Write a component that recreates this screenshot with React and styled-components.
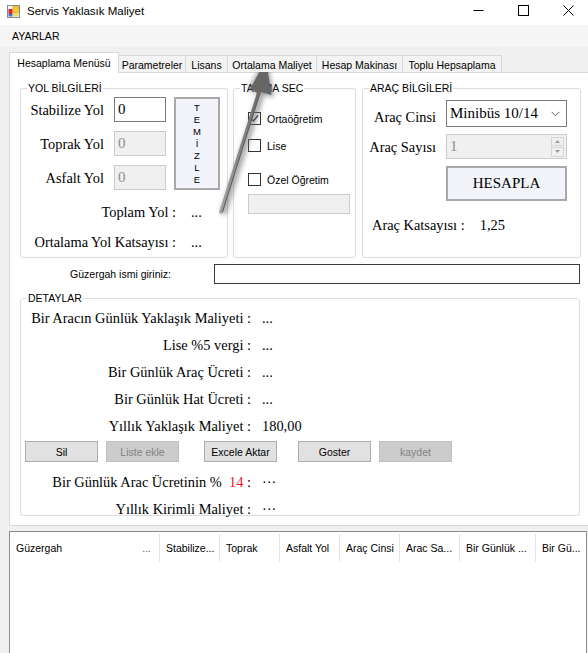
import React from 'react';
import styled, { createGlobalStyle } from 'styled-components';

const SANS = '"Liberation Sans", Arial, sans-serif';
const SERIF = '"Liberation Serif", "Times New Roman", serif';

const GlobalStyle = createGlobalStyle`
  html, body {
    margin: 0;
    padding: 0;
    background: #f0f0f0;
  }
  body {
    font-family: ${SANS};
    font-size: 10.5px;
    color: #000;
  }
  * { box-sizing: border-box; }
`;

const tabs = ['Hesaplama Menüsü', 'Parametreler', 'Lisans', 'Ortalama Maliyet', 'Hesap Makinası', 'Toplu Hepsaplama'];
const tabWidths = [110, 68, 43, 90, 87, 100];

const details = [
  ['Bir Aracın Günlük Yaklaşık Maliyeti :', '...'],
  ['Lise %5 vergi :', '...'],
  ['Bir Günlük Araç Ücreti :', '...'],
  ['Bir Günlük Hat Ücreti :', '...'],
  ['Yıllık Yaklaşık Maliyet :', '180,00'],
];

const columns = [
  { title: 'Güzergah', width: 150, extra: '...' },
  { title: 'Stabilize...', width: 60 },
  { title: 'Toprak', width: 60 },
  { title: 'Asfalt Yol', width: 60 },
  { title: 'Araç Cinsi', width: 60 },
  { title: 'Arac Sa...', width: 60 },
  { title: 'Bir Günlük ...', width: 76 },
  { title: 'Bir Gü...', width: 60 },
];

const App = () => {
  return (
    <>
      <GlobalStyle />
      <Window>
        <TitleBar>
          <AppIcon viewBox="0 0 13 13" width="13" height="13">
            <rect x="0.5" y="0.5" width="12" height="12" fill="#f4f4f4" stroke="#8a8a8a" />
            <rect x="1.5" y="4" width="4" height="5" fill="#d8262b" />
            <rect x="6" y="1.5" width="5.5" height="6" fill="#f7c928" stroke="#d79b12" strokeWidth="0.6" />
            <rect x="1.5" y="9" width="4" height="2.5" fill="#3a78c9" />
            <rect x="6" y="8" width="5.5" height="3.5" fill="#f3d764" />
          </AppIcon>
          <TitleText>Servis Yaklasık Maliyet</TitleText>
          <WinControls>
            <WinButton>
              <svg width="11" height="11" viewBox="0 0 11 11"><line x1="0.5" y1="5.5" x2="10.5" y2="5.5" stroke="#000" /></svg>
            </WinButton>
            <WinButton>
              <svg width="11" height="11" viewBox="0 0 11 11"><rect x="0.5" y="0.5" width="10" height="10" fill="none" stroke="#000" /></svg>
            </WinButton>
            <WinButton>
              <svg width="11" height="11" viewBox="0 0 11 11"><path d="M0.5 0.5 L10.5 10.5 M10.5 0.5 L0.5 10.5" stroke="#000" /></svg>
            </WinButton>
          </WinControls>
        </TitleBar>

        <MenuBar>AYARLAR</MenuBar>

        <TabStrip>
          {tabs.map((t, i) => (
            <Tab key={t} $active={i === 0} $w={tabWidths[i]}>{t}</Tab>
          ))}
        </TabStrip>

        <TabPanel>
          <TopRow>
            <Group $w={208} $h={170}>
              <Legend>YOL BİLGİLERİ</Legend>
              <YolGrid>
                <SerifLabel>Stabilize Yol</SerifLabel>
                <TextBox $w={52}>0</TextBox>
                <TemizleButton>
                  {'TEMİZLE'.split('').map((c, i) => <span key={i}>{c}</span>)}
                </TemizleButton>
                <SerifLabel>Toprak Yol</SerifLabel>
                <TextBox $w={52} $disabled>0</TextBox>
                <SerifLabel>Asfalt Yol</SerifLabel>
                <TextBox $w={52} $disabled>0</TextBox>
              </YolGrid>
              <SumGrid>
                <SerifLabel>Toplam Yol :</SerifLabel>
                <SerifValue>...</SerifValue>
                <SerifLabel>Ortalama Yol Katsayısı :</SerifLabel>
                <SerifValue>...</SerifValue>
              </SumGrid>
            </Group>

            <Group $w={123} $h={170} $ml={5}>
              <Legend>TAŞIMA SEC</Legend>
              <CheckList>
                <CheckRow $mt={23}>
                  <CheckBox>
                    <svg width="11" height="11" viewBox="0 0 11 11">
                      <path d="M2 5.5 L4.5 8 L9 2.5" fill="none" stroke="#333" strokeWidth="1.4" />
                    </svg>
                  </CheckBox>
                  Ortaöğretim
                </CheckRow>
                <CheckRow $mt={14}>
                  <CheckBox />
                  Lise
                </CheckRow>
                <CheckRow $mt={21}>
                  <CheckBox />
                  Özel Öğretim
                </CheckRow>
                <DisabledField />
              </CheckList>
            </Group>

            <Group $w={219} $h={170} $ml={6}>
              <Legend>ARAÇ BİLGİLERİ</Legend>
              <AracGrid>
                <SerifLabel $end>Araç Cinsi</SerifLabel>
                <Combo>
                  <span>Minibüs 10/14</span>
                  <svg width="9" height="6" viewBox="0 0 9 6">
                    <path d="M0.5 0.8 L4.5 4.8 L8.5 0.8" fill="none" stroke="#606060" />
                  </svg>
                </Combo>
                <SerifLabel>Araç Sayısı</SerifLabel>
                <Numeric>
                  <span>1</span>
                  <Spin>
                    <SpinHalf>
                      <svg width="5" height="3" viewBox="0 0 5 3"><path d="M0 3 L2.5 0 L5 3 Z" fill="#9a9a9a" /></svg>
                    </SpinHalf>
                    <SpinHalf>
                      <svg width="5" height="3" viewBox="0 0 5 3"><path d="M0 0 L2.5 3 L5 0 Z" fill="#9a9a9a" /></svg>
                    </SpinHalf>
                  </Spin>
                </Numeric>
                <HesaplaButton>HESAPLA</HesaplaButton>
              </AracGrid>
              <KatsayiRow>
                <span>Araç Katsayısı :</span>
                <KatsayiValue>1,25</KatsayiValue>
              </KatsayiRow>
            </Group>
          </TopRow>

          <RouteRow>
            <RouteLabel>Güzergah ismi giriniz:</RouteLabel>
            <RouteInput />
          </RouteRow>

          <Group $w={560} $h={218} $mt={14}>
            <Legend>DETAYLAR</Legend>
            <DetailList>
              {details.map(([label, value]) => (
                <DetailRow key={label}>
                  <SerifLabel>{label}</SerifLabel>
                  <SerifValue>{value}</SerifValue>
                </DetailRow>
              ))}
              <ButtonRow>
                <WinFormButton>Sil</WinFormButton>
                <WinFormButton $ml={8} $disabled>Liste ekle</WinFormButton>
                <WinFormButton $ml={25}>Excele Aktar</WinFormButton>
                <WinFormButton $ml={21}>Goster</WinFormButton>
                <WinFormButton $ml={8} $disabled>kaydet</WinFormButton>
              </ButtonRow>
              <DetailRow $mt={6}>
                <SerifLabel>Bir Günlük Arac Ücretinin %{'\u00a0\u00a0'}<Red>14</Red>{'\u00a0'}:</SerifLabel>
                <SerifValue>···</SerifValue>
              </DetailRow>
              <DetailRow>
                <SerifLabel>Yıllık Kirimli Maliyet :</SerifLabel>
                <SerifValue>···</SerifValue>
              </DetailRow>
            </DetailList>
          </Group>
        </TabPanel>

        <ListView>
          <ListHeader>
            {columns.map((c) => (
              <HeaderCell key={c.title} $w={c.width}>
                <span>{c.title}</span>
                {c.extra && <HeaderExtra>{c.extra}</HeaderExtra>}
              </HeaderCell>
            ))}
          </ListHeader>
        </ListView>

        <Overlay viewBox="0 0 588 653" width="588" height="653">
          <defs>
            <filter id="blur" x="-50%" y="-50%" width="200%" height="200%">
              <feGaussianBlur stdDeviation="2.5" />
            </filter>
            <linearGradient id="shaft" x1="0" y1="1" x2="0" y2="0">
              <stop offset="0" stopColor="#a0a0a0" />
              <stop offset="1" stopColor="#6e6e6e" />
            </linearGradient>
          </defs>
          <g filter="url(#blur)" opacity="0.65">
            <line x1="223" y1="214" x2="262" y2="92" stroke="#707070" strokeWidth="6" />
            <path d="M266 58 L274 97 L248 90 Z" fill="#5a5a5a" />
          </g>
          <line x1="221" y1="212" x2="259" y2="92" stroke="url(#shaft)" strokeWidth="3.4" strokeLinecap="round" />
          <line x1="222.5" y1="212" x2="260.3" y2="92" stroke="#5c5c5c" strokeWidth="1" />
          <path d="M266 60 L271.5 95 L250 89 Z" fill="#666" />
        </Overlay>
      </Window>
    </>
  );
};

export default App;

/* Styled Components */

const Window = styled.div`
  position: relative;
  width: 588px;
  height: 653px;
  overflow: hidden;
  background: #f0f0f0;
  display: flex;
  flex-direction: column;
`;

const TitleBar = styled.div`
  height: 25px;
  flex: none;
  background: #fff;
  display: flex;
  align-items: center;
  padding-left: 7px;
`;

const AppIcon = styled.svg`
  flex: none;
  margin-right: 7px;
  margin-top: -3px;
`;

const TitleText = styled.span`
  font-size: 11.5px;
  margin-top: -3px;
`;

const WinControls = styled.div`
  margin-left: auto;
  margin-right: -3px;
  display: flex;
  height: 100%;
`;

const WinButton = styled.div`
  width: 45px;
  height: 20px;
  display: flex;
  align-items: center;
  justify-content: center;
`;

const MenuBar = styled.div`
  height: 22px;
  flex: none;
  background: #f5f5f5;
  display: flex;
  align-items: center;
  padding-left: 12px;
  font-size: 10.5px;
`;

const TabStrip = styled.div`
  height: 25px;
  flex: none;
  display: flex;
  align-items: flex-end;
  padding-left: 9px;
  position: relative;
  z-index: 1;
`;

const Tab = styled.div`
  width: ${(p) => p.$w}px;
  height: ${(p) => (p.$active ? 21 : 17)}px;
  margin-bottom: ${(p) => (p.$active ? -1 : 0)}px;
  margin-left: ${(p) => (p.$active ? 0 : -1)}px;
  background: ${(p) => (p.$active ? '#fff' : '#f3f3f3')};
  border: 1px solid #d9d9d9;
  border-bottom: none;
  display: flex;
  align-items: center;
  justify-content: center;
  padding-top: ${(p) => (p.$active ? 0 : 1)}px;
  white-space: nowrap;
  font-size: 10.5px;
`;

const TabPanel = styled.div`
  flex: none;
  margin-left: 9px;
  width: 584px;
  height: 454px;
  background: #fff;
  border: 1px solid #d9d9d9;
  padding: 15px 0 0 10px;
`;

const TopRow = styled.div`
  display: flex;
  align-items: flex-start;
`;

const Group = styled.div`
  position: relative;
  flex: none;
  width: ${(p) => p.$w}px;
  height: ${(p) => p.$h}px;
  margin-left: ${(p) => p.$ml || 0}px;
  margin-top: ${(p) => p.$mt || 0}px;
  border: 1px solid #dcdcdc;
  border-radius: 3px;
`;

const Legend = styled.span`
  position: absolute;
  top: -7px;
  left: 6px;
  padding: 0 1px;
  background: #fff;
  font-size: 10.5px;
  line-height: 13px;
  white-space: nowrap;
`;

const SerifLabel = styled.div`
  font-family: ${SERIF};
  font-size: 14.4px;
  line-height: 20px;
  text-align: right;
  white-space: nowrap;
  align-self: ${(p) => (p.$end ? 'end' : 'center')};
`;

const SerifValue = styled.div`
  font-family: ${SERIF};
  font-size: 14.4px;
  line-height: 20px;
  white-space: nowrap;
  align-self: center;
`;

const YolGrid = styled.div`
  display: grid;
  grid-template-columns: 93px 60px 46px;
  grid-template-rows: repeat(3, 25px);
  row-gap: 9px;
  padding-top: 8px;

  ${SerifLabel} {
    padding-right: 10px;
  }
`;

const TextBox = styled.div`
  width: ${(p) => p.$w}px;
  height: 25px;
  border: 1px solid ${(p) => (p.$disabled ? '#cccccc' : '#7a7a7a')};
  background: ${(p) => (p.$disabled ? '#f0f0f0' : '#fff')};
  color: ${(p) => (p.$disabled ? '#8d8d8d' : '#000')};
  font-family: ${SERIF};
  font-size: 15px;
  line-height: 23px;
  padding-left: 3px;
`;

const TemizleButton = styled.div`
  grid-column: 3;
  grid-row: 1 / span 3;
  height: 93px;
  background: #f3f4fa;
  border: 2px solid #a9a9a9;
  display: flex;
  flex-direction: column;
  align-items: center;
  justify-content: center;
  font-size: 9.5px;
  line-height: 12px;
`;

const SumGrid = styled.div`
  display: grid;
  grid-template-columns: 155px auto;
  grid-auto-rows: 24px;
  column-gap: 15px;
  row-gap: 6px;
  margin-top: 10px;
`;

const CheckList = styled.div`
  display: flex;
  flex-direction: column;
  padding-left: 14px;
`;

const CheckRow = styled.div`
  display: flex;
  align-items: center;
  height: 13px;
  margin-top: ${(p) => p.$mt}px;
  font-size: 10.5px;
  white-space: nowrap;
`;

const CheckBox = styled.span`
  width: 13px;
  height: 13px;
  flex: none;
  border: 1px solid #333;
  background: #fff;
  margin-right: 6px;
  display: flex;
  align-items: center;
  justify-content: center;
`;

const DisabledField = styled.div`
  width: 102px;
  height: 20px;
  margin-top: 8px;
  background: #f0f0f0;
  border: 1px solid #cccccc;
`;

const AracGrid = styled.div`
  display: grid;
  grid-template-columns: 73px 121px;
  grid-template-rows: 27px 25px 35px;
  column-gap: 10px;
  row-gap: 7px;
  padding-top: 11px;
`;

const Combo = styled.div`
  height: 27px;
  border: 1px solid #7a7a7a;
  background: #fff;
  display: flex;
  align-items: center;
  justify-content: space-between;
  padding: 0 6px 0 3px;
  font-family: ${SERIF};
  font-size: 15px;
`;

const Numeric = styled.div`
  height: 25px;
  border: 1px solid #cccccc;
  background: #f0f0f0;
  display: flex;
  align-items: center;
  justify-content: space-between;
  padding: 0 2px 0 3px;
  font-family: ${SERIF};
  font-size: 15px;
  color: #8d8d8d;
`;

const Spin = styled.div`
  width: 13px;
  height: 20px;
  display: flex;
  flex-direction: column;
  gap: 1px;
`;

const SpinHalf = styled.div`
  flex: 1;
  background: #f0f0f0;
  border: 1px solid #d6d6d6;
  display: flex;
  align-items: center;
  justify-content: center;
`;

const HesaplaButton = styled.div`
  grid-column: 2;
  height: 35px;
  background: #f3f4fa;
  border: 2px solid #a9a9a9;
  display: flex;
  align-items: center;
  justify-content: center;
  font-family: ${SERIF};
  font-size: 15px;
`;

const KatsayiRow = styled.div`
  display: flex;
  align-items: center;
  height: 22px;
  margin-top: 13px;
  padding-left: 9px;
  font-family: ${SERIF};
  font-size: 14.4px;
  white-space: nowrap;
`;

const KatsayiValue = styled.span`
  margin-left: 15px;
`;

const RouteRow = styled.div`
  display: flex;
  align-items: center;
  height: 20px;
  margin-top: 6px;
`;

const RouteLabel = styled.div`
  width: 151px;
  text-align: right;
  font-size: 10.5px;
  white-space: nowrap;
`;

const RouteInput = styled.div`
  width: 366px;
  height: 20px;
  margin-left: 43px;
  border: 1px solid #3c3c3c;
  background: #fff;
`;

const DetailList = styled.div`
  display: flex;
  flex-direction: column;
  padding-top: 5px;
`;

const DetailRow = styled.div`
  display: grid;
  grid-template-columns: 230px auto;
  column-gap: 11px;
  height: 27px;
  align-items: center;
  margin-top: ${(p) => p.$mt || 0}px;
`;

const Red = styled.span`
  color: #e8171f;
`;

const ButtonRow = styled.div`
  display: flex;
  height: 21px;
  margin-top: 2px;
  padding-left: 4px;
`;

const WinFormButton = styled.div`
  width: 73px;
  height: 21px;
  margin-left: ${(p) => p.$ml || 0}px;
  background: ${(p) => (p.$disabled ? '#cccccc' : '#e1e1e1')};
  border: 1px solid ${(p) => (p.$disabled ? '#bfbfbf' : '#adadad')};
  color: ${(p) => (p.$disabled ? '#838383' : '#000')};
  display: flex;
  align-items: center;
  justify-content: center;
  font-size: 10.5px;
`;

const ListView = styled.div`
  flex: none;
  margin: 5px 0 0 9px;
  width: 578px;
  height: 130px;
  background: #fff;
  border: 1px solid #8c8c8c;
`;

const ListHeader = styled.div`
  display: flex;
  height: 30px;
  padding-top: 2px;
  overflow: hidden;
`;

const HeaderCell = styled.div`
  flex: none;
  width: ${(p) => p.$w}px;
  display: flex;
  align-items: center;
  justify-content: space-between;
  padding: 0 8px 0 6px;
  border-right: 1px solid #e5e5e5;
  font-size: 10.5px;
  white-space: nowrap;
  overflow: hidden;
`;

const HeaderExtra = styled.span`
  color: #555;
`;

const Overlay = styled.svg`
  position: absolute;
  left: 0;
  top: 0;
  pointer-events: none;
`;
